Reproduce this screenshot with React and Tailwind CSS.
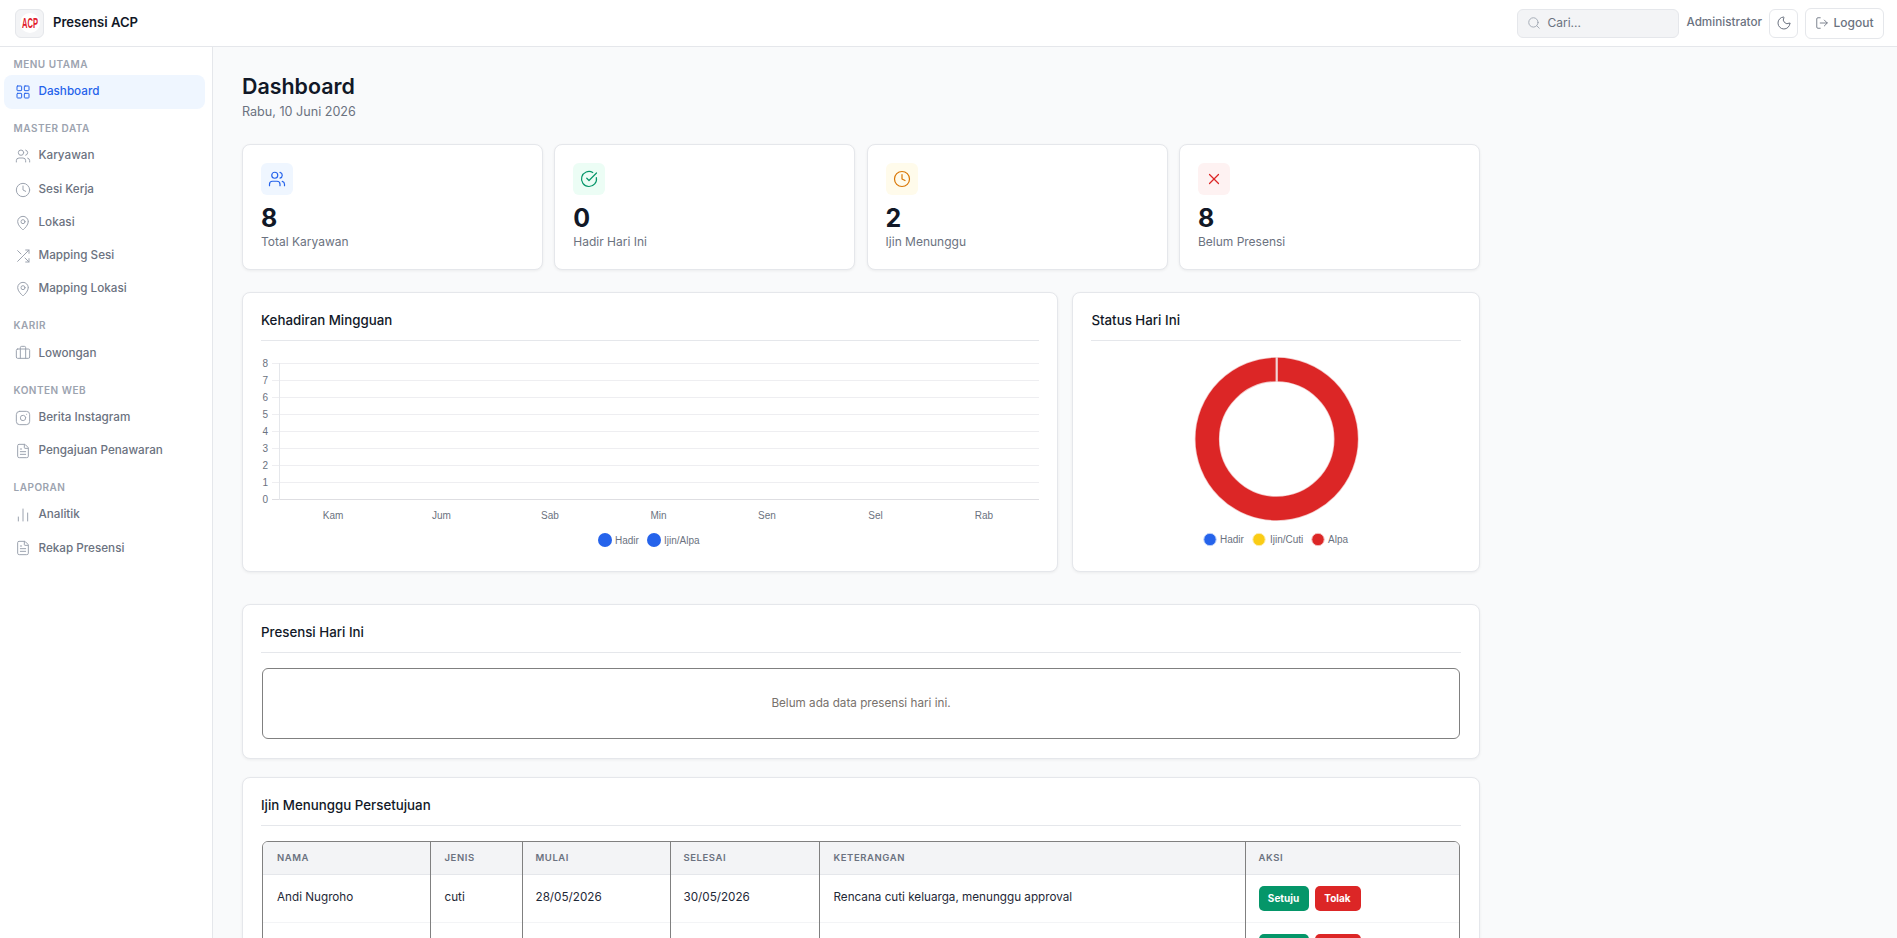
import React from "react";
import { LayoutGrid, Users, Clock, MapPin, Briefcase, Instagram, FileText, ChartNoAxesColumn, CircleCheckBig, X, Search, Moon, LogOut } from "lucide-react";

function ShuffleOld({ size = 16, strokeWidth = 1.5, className = "" }) {
  return (
    <svg width={size} height={size} viewBox="0 0 24 24" fill="none" stroke="currentColor" strokeWidth={strokeWidth} strokeLinecap="round" strokeLinejoin="round" className={className}>
      <path d="M16 3h5v5" />
      <path d="M4 20 21 3" />
      <path d="M21 16v5h-5" />
      <path d="m15 15 6 6" />
      <path d="m4 4 5 5" />
    </svg>
  );
}

const nav = [
  { label: "MENU UTAMA", items: [{ t: "Dashboard", I: LayoutGrid, active: true }] },
  { label: "MASTER DATA", items: [{ t: "Karyawan", I: Users }, { t: "Sesi Kerja", I: Clock }, { t: "Lokasi", I: MapPin }, { t: "Mapping Sesi", I: ShuffleOld }, { t: "Mapping Lokasi", I: MapPin }] },
  { label: "KARIR", items: [{ t: "Lowongan", I: Briefcase }] },
  { label: "KONTEN WEB", items: [{ t: "Berita Instagram", I: Instagram }, { t: "Pengajuan Penawaran", I: FileText }] },
  { label: "LAPORAN", items: [{ t: "Analitik", I: ChartNoAxesColumn }, { t: "Rekap Presensi", I: FileText }] },
];

const stats = [
  { n: "8", l: "Total Karyawan", I: Users, box: "bg-[#eff6ff]", c: "text-[#2563eb]" },
  { n: "0", l: "Hadir Hari Ini", I: CircleCheckBig, box: "bg-[#ecfdf5]", c: "text-[#059669]" },
  { n: "2", l: "Ijin Menunggu", I: Clock, box: "bg-[#fffbeb]", c: "text-[#d97706]" },
  { n: "8", l: "Belum Presensi", I: X, box: "bg-[#fef2f2]", c: "text-[#dc2626]" },
];

const rows = [
  ["Andi Nugroho", "cuti", "28/05/2026", "30/05/2026", "Rencana cuti keluarga, menunggu approval"],
  ["Rina Putri", "ijin", "02/06/2026", "03/06/2026", "Keperluan keluarga, menunggu approval"],
];

const headers = [
  ["NAMA", "pl-[14px]"],
  ["JENIS", "pl-[14px]"],
  ["MULAI", "pl-[13px]"],
  ["SELESAI", "pl-[13px]"],
  ["KETERANGAN", "pl-[14px]"],
  ["AKSI", "pl-[13px]"],
];

function Card({ className = "", children }) {
  return <div className={"bg-white border border-[#e5e7eb] rounded-lg shadow-[0_1px_3px_rgba(0,0,0,0.06)] px-[18px] " + className}>{children}</div>;
}

function CardTitle({ children }) {
  return <div className="text-[13.3px] leading-[17px] font-medium text-[#111827] pb-[11px] border-b border-[#e5e7eb]">{children}</div>;
}

function BarChart() {
  const days = ["Kam", "Jum", "Sab", "Min", "Sen", "Sel", "Rab"];
  const ticks = [8, 7, 6, 5, 4, 3, 2, 1, 0];
  return (
    <svg width="778" height="211" className="block" style={{ fontFamily: "'Liberation Sans', sans-serif" }}>
      {ticks.map((t, i) => (
        <g key={t}>
          <line x1="11" x2="778" y1={22.5 + i * 17} y2={22.5 + i * 17} stroke={t === 0 ? "#dedee2" : "#eeeef1"} strokeWidth="1" />
          <text x="7" y={26 + i * 17} fontSize="10" fill="#6b7280" textAnchor="end">{t}</text>
        </g>
      ))}
      <line x1="18.5" x2="18.5" y1="22" y2="159" stroke="#e5e7eb" />
      {days.map((d, i) => (
        <text key={d} x={72 + i * 108.5} y="177.5" fontSize="10" fill="#6b7280" textAnchor="middle">{d}</text>
      ))}
      <circle cx="344" cy="199" r="7" fill="#2563eb" />
      <text x="354" y="202.5" fontSize="10" fill="#6b7280">Hadir</text>
      <circle cx="393" cy="199" r="7" fill="#2563eb" />
      <text x="403" y="202.5" fontSize="10" fill="#6b7280">Ijin/Alpa</text>
    </svg>
  );
}

function Donut() {
  return (
    <svg width="369" height="211" className="block" style={{ fontFamily: "'Liberation Sans', sans-serif" }}>
      <circle cx="185.7" cy="98" r="69.5" fill="none" stroke="#f3c6c6" strokeWidth="25" />
      <circle cx="185.7" cy="98" r="69.5" fill="none" stroke="#dc2626" strokeWidth="23.4" />
      <line x1="185.7" x2="185.7" y1="16" y2="41" stroke="#f1d6d6" strokeWidth="2.2" />
      <circle cx="119" cy="198.5" r="6.2" fill="#2563eb" stroke="#bfd3fa" strokeWidth="1" />
      <text x="129" y="202" fontSize="10" fill="#6b7280">Hadir</text>
      <circle cx="168" cy="198.5" r="6.2" fill="#facc15" stroke="#fdeeb0" strokeWidth="1" />
      <text x="179" y="202" fontSize="10" fill="#6b7280">Ijin/Cuti</text>
      <circle cx="227" cy="198.5" r="6.2" fill="#dc2626" stroke="#f3c0c0" strokeWidth="1" />
      <text x="237" y="202" fontSize="10" fill="#6b7280">Alpa</text>
    </svg>
  );
}

export default function App() {
  return (
    <div className="h-screen overflow-hidden flex flex-col bg-[#f9fafb] font-[Inter,sans-serif] text-[#111827]">
      <header className="h-[47px] shrink-0 bg-white border-b border-[#e5e7eb] flex items-center pl-[15px] pr-[13px]">
        <div className="w-[29px] h-[29px] rounded-md bg-[#f3f4f6] border border-[#e5e7eb] flex items-center justify-center">
          <svg width="22" height="22" className="block">
            <circle cx="11" cy="11" r="10" fill="#fff" />
            <text x="11" y="16" fontSize="14.5" fontWeight="700" fill="#e11d2e" textAnchor="middle" textLength="16" lengthAdjust="spacingAndGlyphs" style={{ fontFamily: "'Liberation Sans', sans-serif" }}>ACP</text>
          </svg>
        </div>
        <div className="ml-[9px] text-[13.1px] font-semibold text-[#111827]">Presensi ACP</div>
        <div className="ml-auto flex items-center">
          <div className="w-[162px] h-[29px] rounded-md bg-[#f3f4f6] border border-[#e5e7eb] flex items-center pl-[9px] text-[12px] text-[#6b7280]">
            <Search size={14} strokeWidth={1.5} className="text-[#9ca3af]" />
            <span className="ml-[6px]">Cari...</span>
          </div>
          <span className="ml-[7px] pb-px text-[11.7px] font-medium text-[#6b7280]">Administrator</span>
          <button className="ml-[7px] w-[29px] h-[29px] rounded-md bg-white border border-[#e5e7eb] flex items-center justify-center text-[#6b7280]">
            <Moon size={16} strokeWidth={1.5} />
          </button>
          <button className="ml-[7px] w-[79px] h-[31px] rounded-md bg-white border border-[#e5e7eb] flex items-center justify-center gap-[4px] text-[12px] font-medium text-[#6b7280]">
            <LogOut size={14} strokeWidth={1.5} />
            Logout
          </button>
        </div>
      </header>
      <div className="flex flex-1 min-h-0">
        <aside className="w-[213px] shrink-0 bg-white border-r border-[#e5e7eb] pt-[10px] pl-1 pr-[7px] flex flex-col gap-[12.6px]">
          {nav.map((s) => (
            <div key={s.label}>
              <div className="h-[15px] mb-[3.4px] pl-[9.5px] text-[10px] leading-[15px] font-semibold tracking-[0.05em] text-[#9ca3af]">{s.label}</div>
              {s.items.map(({ t, I, active }) => (
                <div key={t} className={"h-[33.25px] rounded-lg flex items-center pl-[10.5px] gap-2 text-[11.7px] font-medium " + (active ? "bg-[#eff6ff] text-[#2563eb]" : "text-[#6b7280]")}>
                  <I size={16} strokeWidth={1.5} className={active ? "text-[#2563eb]" : "text-[#9ca3af]"} />
                  {t}
                </div>
              ))}
            </div>
          ))}
        </aside>
        <main className="flex-1 min-w-0 overflow-hidden pl-[29px] pt-6">
          <div className="w-[1238px]">
            <h1 className="text-[21.4px] leading-[30px] font-semibold text-[#111827]">Dashboard</h1>
            <div className="mt-[1.5px] text-[12.6px] leading-[18px] text-[#6b7280]">Rabu, 10 Juni 2026</div>
            <div className="grid grid-cols-4 gap-[11.2px] mt-[23.5px]">
              {stats.map(({ n, l, I, box, c }) => (
                <Card key={l} className="pt-[18px] pb-[18px]">
                  <div className={"w-8 h-8 rounded-md flex items-center justify-center " + box + " " + c}>
                    <I size={18} strokeWidth={1.6} />
                  </div>
                  <div className="mt-2 text-[25px] leading-[30px] font-bold text-[#111827]">{n}</div>
                  <div className="text-[12px] leading-[18px] text-[#6b7280]">{l}</div>
                </Card>
              ))}
            </div>
            <div className="grid grid-cols-[2fr_1fr] gap-[14.4px] mt-[22px]">
              <Card className="pt-[19px] pb-[19px]">
                <CardTitle>Kehadiran Mingguan</CardTitle>
                <BarChart />
              </Card>
              <Card className="pt-[19px] pb-[19px]">
                <CardTitle>Status Hari Ini</CardTitle>
                <Donut />
              </Card>
            </div>
            <Card className="pt-[19px] pb-[19px] mt-[32px]">
              <CardTitle>Presensi Hari Ini</CardTitle>
              <div className="mt-[15px] mx-px h-[71px] rounded-md border border-[#808080] flex items-center justify-center text-[11.7px] text-[#78716c]">
                Belum ada data presensi hari ini.
              </div>
            </Card>
            <Card className="pt-[19px] pb-[18px] mt-[18px]">
              <CardTitle>Ijin Menunggu Persetujuan</CardTitle>
              <div className="mt-[15px] mx-px rounded-md border border-[#808080] overflow-hidden">
                <table className="w-full table-fixed border-collapse">
                  <colgroup>
                    <col className="w-[167px]" />
                    <col className="w-[92px]" />
                    <col className="w-[148px]" />
                    <col className="w-[149px]" />
                    <col className="w-[426px]" />
                    <col />
                  </colgroup>
                  <thead>
                    <tr className="h-[32px] bg-[#f3f4f6] border-b border-[#e5e7eb]">
                      {headers.map(([h, pad], i) => (
                        <th key={h} className={pad + " text-left text-[9.5px] font-semibold tracking-[0.06em] text-[#6b7280] " + (i < 5 ? "border-r border-[#808080]" : "")}>{h}</th>
                      ))}
                    </tr>
                  </thead>
                  <tbody>
                    {rows.map((r) => (
                      <tr key={r[0]} className="h-[48px] border-b border-[#f3f4f6]">
                        {r.map((c, i) => (
                          <td key={c} className={headers[i][1] + " text-[11.7px] text-[#1f2937] border-r border-[#808080]"}>{c}</td>
                        ))}
                        <td className="pl-[13px]">
                          <div className="flex gap-[6px]">
                            <button className="w-[50px] h-[25px] rounded-[5px] bg-[#059669] text-white text-[10px] font-bold">Setuju</button>
                            <button className="w-[46px] h-[25px] rounded-[5px] bg-[#dc2626] text-white text-[10px] font-bold">Tolak</button>
                          </div>
                        </td>
                      </tr>
                    ))}
                  </tbody>
                </table>
              </div>
            </Card>
          </div>
        </main>
      </div>
    </div>
  );
}
